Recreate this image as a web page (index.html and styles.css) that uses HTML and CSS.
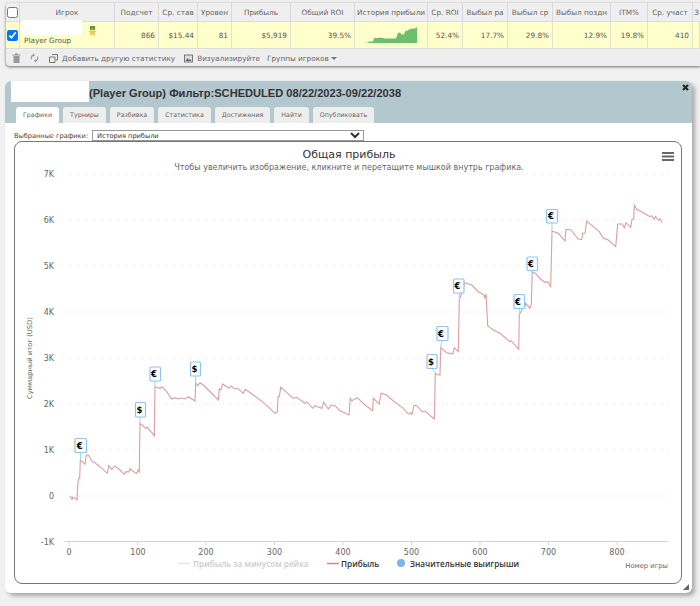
FILE: index.html
```html
<!DOCTYPE html>
<html lang="en">
<head>
    <meta charset="UTF-8">
    <meta name="viewport" content="width=device-width, initial-scale=1.0">
    <title>Player Group</title>
    <link rel="stylesheet" href="styles.css">
</head>
<body>
    <div class="grid-panel">
        <div class="grid-row grid-head">
            <div class="cell"><input type="checkbox" class="check"></div>
            <div class="cell">Игрок</div>
            <div class="cell">Подсчет</div>
            <div class="cell">Ср. став</div>
            <div class="cell">Уровен</div>
            <div class="cell">Прибыль</div>
            <div class="cell">Общий ROI</div>
            <div class="cell">История прибыли</div>
            <div class="cell">Ср. ROI</div>
            <div class="cell">Выбыл ра</div>
            <div class="cell">Выбыл ср</div>
            <div class="cell">Выбыл поздн</div>
            <div class="cell">ITM%</div>
            <div class="cell">Ср. участ</div>
            <div class="cell">З</div>
        </div>
        <div class="grid-row grid-data">
            <div class="cell"><input type="checkbox" class="check" checked></div>
            <div class="cell player-cell">
                <div class="player-logo"></div>
                <svg class="medal" width="9" height="11" viewBox="0 0 9 11">
                    <rect x="2" y="0" width="5" height="4" fill="#5c9a3c"/>
                    <polygon points="4.5,2 5.7,4.8 8.8,5.1 6.5,7.1 7.2,10.2 4.5,8.6 1.8,10.2 2.5,7.1 0.2,5.1 3.3,4.8" fill="#ecc95c"/>
                </svg>
                <div class="player-name">Player Group</div>
            </div>
            <div class="cell">866</div>
            <div class="cell">$15.44</div>
            <div class="cell">81</div>
            <div class="cell">$5,919</div>
            <div class="cell">39.5%</div>
            <div class="cell spark-cell">
                <svg width="56" height="18" viewBox="0 0 56 18">
                    <polygon fill="#6dbd6d" points="1,17 5,16.5 6,15.5 10,15.5 11,12 15,12 17,11.5 22,12.5 30,12.5 33,12.5 35,7 37,6.5 38.5,8.5 41,8.5 42.5,4.5 44,5 46,3.5 49,2.5 52,2.5 54,1 54,17"/>
                </svg>
            </div>
            <div class="cell">52.4%</div>
            <div class="cell">17.7%</div>
            <div class="cell">29.8%</div>
            <div class="cell">12.9%</div>
            <div class="cell">19.8%</div>
            <div class="cell">410</div>
            <div class="cell"></div>
        </div>
        <div class="grid-tools">
            <svg class="tool-icon trash" width="9" height="10" viewBox="0 0 9 10">
                <path d="M0.5 1.5h8v1h-8zM3 0.5h3v1h-3zM1.5 3h6v7h-6z" fill="#999"/>
            </svg>
            <svg class="tool-icon refresh" width="9" height="10" viewBox="0 0 9 10">
                <path d="M1.5 6.5a3 3 0 0 1 2-4.3M7.5 3.5a3 3 0 0 1-2 4.3" fill="none" stroke="#999" stroke-width="1.2"/>
                <path d="M3 0l2 2.2-2 1.8zM6 10L4 7.8 6 6z" fill="#999"/>
            </svg>
            <svg class="tool-icon add" width="9" height="9" viewBox="0 0 9 9">
                <path d="M3 .5h5.5V6H7M.5 3H6v5.500H.5z" fill="none" stroke="#777"/>
            </svg>
            <span class="tool-label">Добавить другую статистику</span>
            <svg class="tool-icon picture" width="9" height="9" viewBox="0 0 9 9">
                <rect x=".5" y="1" width="8" height="7" fill="#ddd" stroke="#777"/>
                <path d="M1.500 7l2-3 1.500 2 1-1 1.500 2z" fill="#666"/>
            </svg>
            <span class="tool-label">Визуализируйте</span>
            <span class="tool-label groups">Группы игроков <span class="caret"></span></span>
        </div>
    </div>

    <div class="report-window">
        <div class="report-head">
            <div class="report-title">
                <div class="title-logo"></div>
                <h1>(Player Group) Фильтр:SCHEDULED 08/22/2023-09/22/2038</h1>
            </div>
            <div class="tabs">
                <div class="tab active">Графики</div>
                <div class="tab">Турниры</div>
                <div class="tab">Разбивка</div>
                <div class="tab">Статистика</div>
                <div class="tab">Достижения</div>
                <div class="tab">Найти</div>
                <div class="tab">Опубликовать</div>
            </div>
            <svg class="close-icon" width="7" height="7" viewBox="0 0 7 7">
                <path d="M1 1l5 5M6 1L1 6" stroke="#222" stroke-width="2"/>
            </svg>
        </div>
        <div class="report-body">
            <div class="chart-picker">
                <label for="chartSelect">Выбранные графики:</label>
                <select id="chartSelect" class="chart-select">
                    <option>История прибыли</option>
                </select>
            </div>
            <div class="chart-box">
                <svg class="chart" width="666" height="441" viewBox="15 142 666 441">
                    <text class="chart-title" x="349" y="158">Общая прибыль</text>
                    <text class="chart-sub" x="349" y="170">Чтобы увеличить изображение, кликните и перетащите мышкой внутрь графика.</text>
                    <path d="M662 153h12M662 156.500h12M662 160h12" stroke="#666" stroke-width="1.800"/>

                    <g class="grid-lines">
                        <path d="M63 174H668M63 220H668M63 266H668M63 312H668M63 358H668M63 404H668M63 450H668M63 496H668"/>
                    </g>
                    <path class="axis" d="M64 541.500H668M69 542v3M137.500 542v3M206 542v3M274.500 542v3M343 542v3M411.500 542v3M480 542v3M548.500 542v3M617 542v3"/>

                    <g class="y-labels">
                        <text x="54" y="177">7K</text>
                        <text x="54" y="223">6K</text>
                        <text x="54" y="269">5K</text>
                        <text x="54" y="315">4K</text>
                        <text x="54" y="361">3K</text>
                        <text x="54" y="407">2K</text>
                        <text x="54" y="453">1K</text>
                        <text x="54" y="499">0</text>
                        <text x="54" y="545">-1K</text>
                    </g>
                    <g class="x-labels">
                        <text x="69" y="555">0</text>
                        <text x="138" y="555">100</text>
                        <text x="206" y="555">200</text>
                        <text x="274.500" y="555">300</text>
                        <text x="343" y="555">400</text>
                        <text x="411.500" y="555">500</text>
                        <text x="480" y="555">600</text>
                        <text x="548.500" y="555">700</text>
                        <text x="617" y="555">800</text>
                    </g>
                    <text class="axis-title" transform="translate(32 358) rotate(-90)">Суммарный итог (USD)</text>
                    <text class="axis-title x-title" x="668" y="568">Номер игры</text>

                    <polyline class="profit-line" points="70,496 72,499.300 72.700,497.300 74,498 75.300,498 77,500 78,481.700 79,478.300 79.700,478.300 80.300,460 83.300,462.300 85,464.300 86.300,455 88.300,455 92.300,461.700 95,462.700 100,466.700 107.300,473.300 108.700,465.700 111.700,469.300 115,465.700 120,470 124.300,474.300 126,471.700 129,472 130,468.700 135,472.700 136.700,473.300 138.300,470 139.300,471.700 140,423.300 143.300,426 145.700,428.300 147.300,427.300 154.300,435.700 155,386.700 160,388.300 162.300,386.700 166.700,391.700 171.700,399 175,397.700 178.300,399 181.700,398 185,399 188.300,396.700 195,401 195.700,382.700 197.700,385.700 200,382.700 203.300,385 208.300,390 218.300,400 219.300,389 221,390 222.700,384 226.700,386.700 228.700,388.300 230.700,386 235,389 237.700,388.300 243.300,393.300 245.300,389.300 253.300,395 263.300,402.300 275,413.300 277.300,411.700 278,396.700 279.300,396.700 280.700,387.300 286.700,392.300 293.300,398.300 296.700,397.300 305,403.300 306.700,401.700 312.700,408.300 315,405.700 321.700,408.300 323.700,402.300 328.300,409 331,405 335,405.700 340,410.700 349,415 350.300,398.300 351.700,400.700 357.300,397.700 365,405 372.700,410.700 373.300,398.300 379.300,404 381,393.300 386.700,395 393.300,401 403.300,408.300 408.300,414 410.700,412.700 412,414.300 414,405.300 416.700,405.700 422.300,411.700 425,411 434.300,419 435.300,373.300 437,374.500 440,375 440.700,347.700 446.700,352.700 452.700,354 454.300,347.700 458.300,351.700 459.300,300 461.700,293.300 465,282.700 471.700,285 478.300,291.700 484,295 484.700,298.300 486,294 487.700,325.700 493.300,330 500,333.300 510,341.700 511,340.700 518.700,349 519.300,315 522.700,308.300 525,306.700 525.700,303.300 530,308.300 531.300,304 532.300,271.700 536,274 541.700,280 545,282.300 547.700,281.700 550.700,286.700 552,231 558.300,233.300 565,241 566,229.300 571,230 578.300,239 581.700,239.700 582.700,233.300 585,233.300 586.700,221 593.300,226.700 599.300,231.700 603.300,238.300 608.300,240 615.700,246.700 617.700,224 622.300,224 624.300,227.700 626,222.700 630.700,227.300 632,219.300 633.700,219.300 634.300,205 636.700,209.300 643.300,212.700 650,216.700 651.700,215.700 654,219.300 655.700,216.700 658.300,220 660,219 662.300,222.700"/>

                    <g class="flags">
                        <path d="M80.500 452.500V460"/><rect x="75" y="438.500" width="11.500" height="14" rx="1"/><text x="79.700" y="449">€</text>
                        <path d="M140 417V423"/><rect x="135.500" y="402.500" width="10" height="14.500" rx="1"/><text x="139.500" y="413">$</text>
                        <path d="M155 381V387"/><rect x="150" y="367" width="10.500" height="14" rx="1"/><text x="154" y="377">€</text>
                        <path d="M195.500 376V383"/><rect x="190.500" y="362" width="10" height="14" rx="1"/><text x="194.500" y="371.500">$</text>
                        <path d="M432 368.500L435.500 373"/><rect x="427" y="354.500" width="10" height="14" rx="1"/><text x="431" y="364.500">$</text>
                        <path d="M442 340L440.700 347.700"/><rect x="437" y="326.500" width="11" height="14" rx="1"/><text x="441" y="336.500">€</text>
                        <path d="M459.300 293V300"/><rect x="453.500" y="279" width="10.500" height="14" rx="1"/><text x="457.500" y="289">€</text>
                        <path d="M519.300 308.500V315"/><rect x="514" y="294.500" width="10.500" height="14" rx="1"/><text x="518" y="304.500">€</text>
                        <path d="M532.300 270.500V278"/><rect x="527" y="257" width="10.500" height="13.500" rx="1"/><text x="531" y="266.500">€</text>
                        <path d="M552 223V231"/><rect x="546.500" y="209.500" width="11" height="13.500" rx="1"/><text x="551" y="219">€</text>
                    </g>

                    <g class="legend">
                        <path class="legend-off" d="M178 563.500H190"/>
                        <text class="legend-off-text" x="193" y="566.500">Прибыль за минусом рейка</text>
                        <path class="legend-line" d="M327 563.500H339"/>
                        <text x="341" y="566.500">Прибыль</text>
                        <circle cx="401" cy="563" r="4" fill="#7cb5ec"/>
                        <text x="410" y="566.500">Значительные выигрыши</text>
                    </g>
                </svg>
            </div>
            <svg class="resize-grip" width="6" height="6" viewBox="0 0 6 6">
                <path d="M6 0v6H0z" fill="#666"/>
            </svg>
        </div>
    </div>
</body>
</html>
```
FILE: styles.css
```css
html {
    overflow: hidden;
}

body {
    font-family: 'DejaVu Sans', sans-serif;
    font-size: 7.300px;
    margin: 0;
    padding: 3px 0 0 6px;
    background-color: #f1f1f1;
    color: #666666;
    height: 603px;
    overflow: hidden;
}

/* top grid */
.grid-panel {
    width: 694px;
    height: 63px;
    background-color: #eeeeee;
    border-radius: 4px 0 0 4px;
    box-shadow: 0 1px 3px rgba(0, 0, 0, 0.55);
    overflow: hidden;
}

.grid-row {
    display: grid;
    grid-template-columns: 14px 95px 44px 39px 34px 59px 64px 73px 35px 45px 45px 58px 37px 45px 7px;
}

.grid-head {
    height: 19px;
    background-color: #efefef;
}

.grid-head .cell {
    display: flex;
    align-items: center;
    justify-content: center;
    overflow: hidden;
    white-space: nowrap;
    border-right: 1px solid #d9d9d9;
    border-bottom: 1px solid #dddddd;
}

.grid-head .cell:last-child {
    border-right: none;
}

.grid-data {
    height: 27px;
    background-color: #ffffcc;
}

.grid-data .cell {
    display: flex;
    align-items: center;
    justify-content: flex-end;
    padding-right: 3px;
    border-right: 1px solid #e3e3cf;
    border-bottom: 1px solid #dddddd;
    color: #555555;
}

.check {
    width: 11px;
    height: 11px;
    margin: 0;
    accent-color: #0075ff;
}

.grid-row .cell:first-child {
    justify-content: center;
    padding: 0;
}

.grid-data .player-cell {
    position: relative;
    display: block;
    padding: 0;
}

.player-logo {
    position: absolute;
    left: 1px;
    top: -2px;
    width: 61px;
    height: 15px;
    background-color: #ffffff;
}

.medal {
    position: absolute;
    left: 68px;
    top: 4px;
}

.player-name {
    position: absolute;
    left: 4px;
    top: 14px;
}

.grid-data .spark-cell {
    justify-content: center;
    padding: 0;
}

.grid-tools {
    display: flex;
    align-items: center;
    height: 16px;
    padding-left: 6px;
    margin-top: 1px;
}

.tool-icon {
    flex: none;
}

.refresh {
    margin-left: 9px;
}

.add {
    margin-left: 10px;
}

.tool-label {
    margin-left: 4px;
    white-space: nowrap;
}

.picture {
    margin-left: 9px;
}

.groups {
    margin-left: 7px;
}

.caret {
    display: inline-block;
    border: 3px solid transparent;
    border-top-color: #777777;
    border-bottom: none;
    vertical-align: middle;
}

/* report window */
.report-window {
    width: 687px;
    height: 512px;
    margin: 15px 0 0 -1px;
    background-color: #ffffff;
    border-radius: 6px;
    box-shadow: 3px 3px 4px rgba(0, 0, 0, 0.3);
    display: flex;
    flex-direction: column;
}

.report-head {
    position: relative;
    height: 42px;
    padding-left: 6px;
    background-color: #b3c7ce;
    border-radius: 6px 6px 0 0;
}

.report-title {
    display: flex;
    height: 26px;
}

.title-logo {
    width: 78px;
    height: 21px;
    background-color: #ffffff;
}

.report-title h1 {
    margin: 6px 0 0;
    font-family: 'Liberation Sans', Arial, sans-serif;
    font-size: 11.100px;
    font-weight: bold;
    color: #333333;
    white-space: nowrap;
}

.tabs {
    display: flex;
    gap: 4px;
    padding-left: 5px;
}

.tab {
    height: 16px;
    line-height: 16px;
    padding: 0 7px;
    background-color: #eeeeee;
    border-radius: 3px 3px 0 0;
    color: #666666;
    font-size: 6.300px;
}

.tab.active {
    background-color: #ffffff;
}

.close-icon {
    position: absolute;
    right: 3px;
    top: 3px;
}

.report-body {
    position: relative;
    flex: 1;
    padding: 7px 9px 8px;
}

.chart-picker {
    display: flex;
    align-items: center;
    height: 11px;
    gap: 4px;
    color: #444444;
    font-size: 6.600px;
}

.chart-select {
    width: 272px;
    height: 11px;
    padding: 0;
    margin: 0;
    border: 1px solid #999999;
    border-radius: 0;
    background-color: #ffffff;
    font-family: 'DejaVu Sans', sans-serif;
    font-size: 6.600px;
    color: #333333;
}

.chart-box {
    width: 666px;
    height: 441px;
    border: 1px solid #777777;
    border-radius: 8px;
    overflow: hidden;
}

.chart {
    display: block;
}

.chart-title {
    font-size: 11px;
    fill: #333333;
    text-anchor: middle;
}

.chart-sub {
    font-size: 8px;
    fill: #666666;
    text-anchor: middle;
}

.grid-lines path {
    fill: none;
    stroke: #e6e6e6;
    stroke-dasharray: 1 3;
}

.axis {
    fill: none;
    stroke: #ccd6eb;
}

.y-labels text {
    font-size: 8px;
    fill: #666666;
    text-anchor: end;
}

.x-labels text {
    font-size: 8px;
    fill: #666666;
    text-anchor: middle;
}

.axis-title {
    font-size: 6.800px;
    fill: #666666;
    text-anchor: middle;
}

.x-title {
    text-anchor: end;
}

.profit-line {
    fill: none;
    stroke: #d8a0a0;
    stroke-width: 1.100;
}

.flags path {
    stroke: #a9d0f5;
    fill: none;
}

.flags rect {
    fill: #ffffff;
    stroke: #90c4f4;
    stroke-width: 1.200;
}

.flags text {
    font-size: 8.500px;
    font-weight: bold;
    fill: #000000;
    text-anchor: middle;
}

.legend text {
    font-family: 'Open Sans', sans-serif;
    font-size: 8.200px;
    font-weight: 600;
    fill: #333333;
}

.legend .legend-off-text {
    fill: #cccccc;
}

.legend-off {
    stroke: #e6e6e6;
    stroke-width: 1.500;
}

.legend-line {
    stroke: #cf8a8a;
    stroke-width: 1.500;
}

.resize-grip {
    position: absolute;
    right: 3px;
    bottom: 3px;
}
```
